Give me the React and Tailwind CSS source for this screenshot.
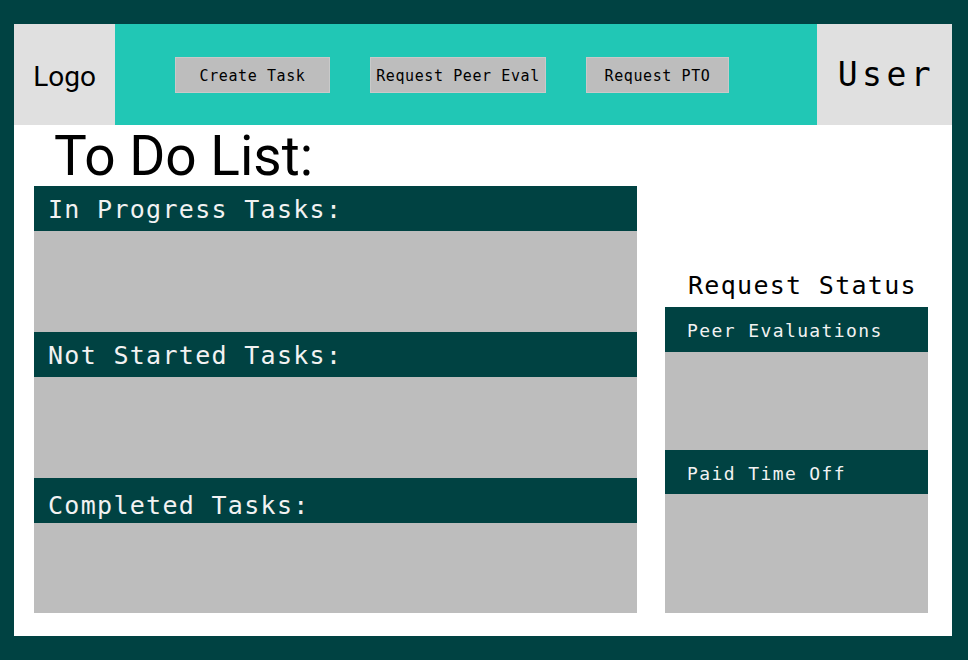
import React from 'react';

const mono = "font-['DejaVu_Sans_Mono',monospace]";

function NavButton({ label, width }) {
    return (
        <button className={`${width} h-[36px] pt-[3px] bg-[#bdbdbd] border border-[#c9c9c9] text-[15px] tracking-[0.6px] text-black ${mono}`}>
            {label}
        </button>
    );
}

function TaskSection({ title, bodyHeight, textClass = 'pt-[3px]' }) {
    return (
        <div>
            <div className={`h-[45px] bg-[#004242] flex items-center pl-[14px] text-[25px] tracking-[1.3px] text-[#f2f2f2] ${mono} ${textClass}`}>
                {title}
            </div>
            <div className={`${bodyHeight} bg-[#bdbdbd]`} />
        </div>
    );
}

function StatusSection({ title, headHeight, bodyHeight }) {
    return (
        <div>
            <div className={`${headHeight} bg-[#004242] flex items-center pl-[22px] pt-[2px] text-[18px] tracking-[1.4px] text-[#f2f2f2] ${mono}`}>
                {title}
            </div>
            <div className={`${bodyHeight} bg-[#bdbdbd]`} />
        </div>
    );
}

export default function App() {
    return (
        <div className="w-[968px] h-[660px] bg-[#004242] pt-[24px] pl-[14px] pr-[16px] pb-[24px]">
            <div className="bg-white h-full flex flex-col">
                {/* header */}
                <div className="h-[101px] flex">
                    <div className="w-[101px] bg-[#e0e0e0] flex items-center justify-center pt-[4px] font-['Roboto',sans-serif] text-[28px] text-black">
                        Logo
                    </div>
                    <div className="flex-1 bg-[#21c7b5] flex items-center pl-[60px] gap-[40px]">
                        <NavButton label="Create Task" width="w-[155px]" />
                        <NavButton label="Request Peer Eval" width="w-[176px]" />
                        <NavButton label="Request PTO" width="w-[143px]" />
                    </div>
                    <div className={`w-[135px] bg-[#e0e0e0] flex items-center justify-center pl-[4px] text-[33px] tracking-[4.5px] text-black ${mono}`}>
                        User
                    </div>
                </div>

                {/* content */}
                <div className="flex px-[20px] gap-[28px]">
                    <div className="w-[603px]">
                        <div className="h-[61px] pt-[2px] pl-[20px] font-['Roboto',sans-serif] text-[55px] leading-[59px] text-black">
                            To Do List:
                        </div>
                        <TaskSection title="In Progress Tasks:" bodyHeight="h-[101px]" />
                        <TaskSection title="Not Started Tasks:" bodyHeight="h-[101px]" />
                        <TaskSection title="Completed Tasks:" bodyHeight="h-[90px]" textClass="pt-[11px]" />
                    </div>
                    <div className="w-[263px] pt-[141px]">
                        <div className={`h-[41px] flex items-center pl-[23px] pb-[2px] text-[25px] tracking-[1.3px] text-black ${mono}`}>
                            Request Status
                        </div>
                        <StatusSection title="Peer Evaluations" headHeight="h-[45px]" bodyHeight="h-[98px]" />
                        <StatusSection title="Paid Time Off" headHeight="h-[44px]" bodyHeight="h-[119px]" />
                    </div>
                </div>
            </div>
        </div>
    );
}
